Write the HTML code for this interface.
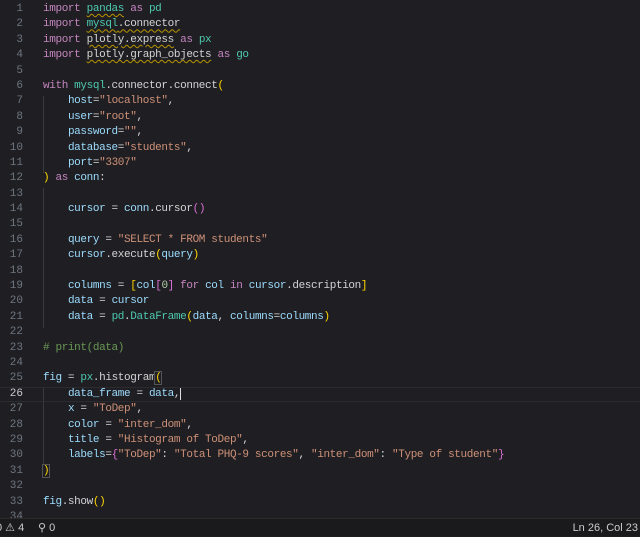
<!DOCTYPE html>
<html><head><meta charset="utf-8"><style>
html,body{margin:0;padding:0;width:640px;height:535px;overflow:hidden;background:#1f1e22;}
.ed{position:absolute;left:0;top:2px;width:640px;font-family:"Liberation Mono",monospace;font-size:11px;letter-spacing:-0.37px;}
.l{position:relative;height:15.4px;line-height:15.4px;white-space:pre;color:#d4d4d4;}
.n{position:absolute;left:0;width:23px;text-align:right;color:#6e7681;letter-spacing:0}
.c{position:absolute;left:43px;}
.cur{border-top:1px solid #2c2c30;border-bottom:1px solid #2c2c30;height:13.4px;line-height:13.4px;}
.cur .n{color:#ccc;}
.k{color:#c586c0}.m{color:#4ec9b0}.v{color:#9cdcfe}.s{color:#ce9178}.cm{color:#6a9955}.y{color:#ffd700}.p{color:#da70d6}.nu{color:#b5cea8}.b{color:#569cd6}
.sq{text-decoration:underline wavy #b89500;text-decoration-thickness:1px;text-underline-offset:2px}
.g{position:absolute;left:43px;width:1px;background:#3a3a3e;}
.sb{position:absolute;left:0;top:518px;width:640px;height:17px;background:#1a1a1d;border-top:1px solid #2b2b2b;font-family:"Liberation Sans",sans-serif;font-size:11px;color:#ccc;line-height:18px;}
</style></head><body>
<div class="g" style="top:96px;height:77px"></div>
<div class="g" style="top:188px;height:140px"></div>
<div class="g" style="top:388px;height:77px"></div>
<div class="ed">
<div class="l"><span class="n">1</span><span class="c"><span class="k">import</span> <span class="m sq">pandas</span> <span class="k">as</span> <span class="m">pd</span></span></div>
<div class="l"><span class="n">2</span><span class="c"><span class="k">import</span> <span class="sq"><span class="m">mysql</span>.connector</span></span></div>
<div class="l"><span class="n">3</span><span class="c"><span class="k">import</span> <span class="sq">plotly.express</span> <span class="k">as</span> <span class="m">px</span></span></div>
<div class="l"><span class="n">4</span><span class="c"><span class="k">import</span> <span class="sq">plotly.graph_objects</span> <span class="k">as</span> <span class="m">go</span></span></div>
<div class="l"><span class="n">5</span></div>
<div class="l"><span class="n">6</span><span class="c"><span class="k">with</span> <span class="m">mysql</span>.connector.connect<span class="y">(</span></span></div>
<div class="l"><span class="n">7</span><span class="c">    <span class="v">host</span>=<span class="s">"localhost"</span>,</span></div>
<div class="l"><span class="n">8</span><span class="c">    <span class="v">user</span>=<span class="s">"root"</span>,</span></div>
<div class="l"><span class="n">9</span><span class="c">    <span class="v">password</span>=<span class="s">""</span>,</span></div>
<div class="l"><span class="n">10</span><span class="c">    <span class="v">database</span>=<span class="s">"students"</span>,</span></div>
<div class="l"><span class="n">11</span><span class="c">    <span class="v">port</span>=<span class="s">"3307"</span></span></div>
<div class="l"><span class="n">12</span><span class="c"><span class="y">)</span> <span class="k">as</span> <span class="v">conn</span>:</span></div>
<div class="l"><span class="n">13</span></div>
<div class="l"><span class="n">14</span><span class="c">    <span class="v">cursor</span> = <span class="v">conn</span>.cursor<span class="p">()</span></span></div>
<div class="l"><span class="n">15</span></div>
<div class="l"><span class="n">16</span><span class="c">    <span class="v">query</span> = <span class="s">"SELECT * FROM students"</span></span></div>
<div class="l"><span class="n">17</span><span class="c">    <span class="v">cursor</span>.execute<span class="y">(</span><span class="v">query</span><span class="y">)</span></span></div>
<div class="l"><span class="n">18</span></div>
<div class="l"><span class="n">19</span><span class="c">    <span class="v">columns</span> = <span class="y">[</span><span class="v">col</span><span class="p">[</span><span class="nu">0</span><span class="p">]</span> <span class="k">for</span> <span class="v">col</span> <span class="k">in</span> <span class="v">cursor</span>.description<span class="y">]</span></span></div>
<div class="l"><span class="n">20</span><span class="c">    <span class="v">data</span> = <span class="v">cursor</span></span></div>
<div class="l"><span class="n">21</span><span class="c">    <span class="v">data</span> = <span class="m">pd</span>.<span class="m">DataFrame</span><span class="y">(</span><span class="v">data</span>, <span class="v">columns</span>=<span class="v">columns</span><span class="y">)</span></span></div>
<div class="l"><span class="n">22</span></div>
<div class="l"><span class="n">23</span><span class="c"><span class="cm"># print(data)</span></span></div>
<div class="l"><span class="n">24</span></div>
<div class="l"><span class="n">25</span><span class="c"><span class="v">fig</span> = <span class="m">px</span>.histogram<span class="y" style="outline:1px solid #555">(</span></span></div>
<div class="l cur"><span class="n">26</span><span class="c">    <span class="v">data_frame</span> = <span class="v">data</span>,<span style="border-left:1px solid #ddd"></span></span></div>
<div class="l"><span class="n">27</span><span class="c">    <span class="v">x</span> = <span class="s">"ToDep"</span>,</span></div>
<div class="l"><span class="n">28</span><span class="c">    <span class="v">color</span> = <span class="s">"inter_dom"</span>,</span></div>
<div class="l"><span class="n">29</span><span class="c">    <span class="v">title</span> = <span class="s">"Histogram of ToDep"</span>,</span></div>
<div class="l"><span class="n">30</span><span class="c">    <span class="v">labels</span>=<span class="p">{</span><span class="s">"ToDep"</span>: <span class="s">"Total PHQ-9 scores"</span>, <span class="s">"inter_dom"</span>: <span class="s">"Type of student"</span><span class="p">}</span></span></div>
<div class="l"><span class="n">31</span><span class="c"><span class="y" style="outline:1px solid #555">)</span></span></div>
<div class="l"><span class="n">32</span></div>
<div class="l"><span class="n">33</span><span class="c"><span class="v">fig</span>.show<span class="y">()</span></span></div>
<div class="l"><span class="n">34</span></div>
</div>
<div class="sb"><span style="position:absolute;left:-4px">0 ⚠ 4</span><span style="position:absolute;left:38px">⚲ 0</span><span style="position:absolute;right:2px">Ln 26, Col 23</span></div>
</body></html>
